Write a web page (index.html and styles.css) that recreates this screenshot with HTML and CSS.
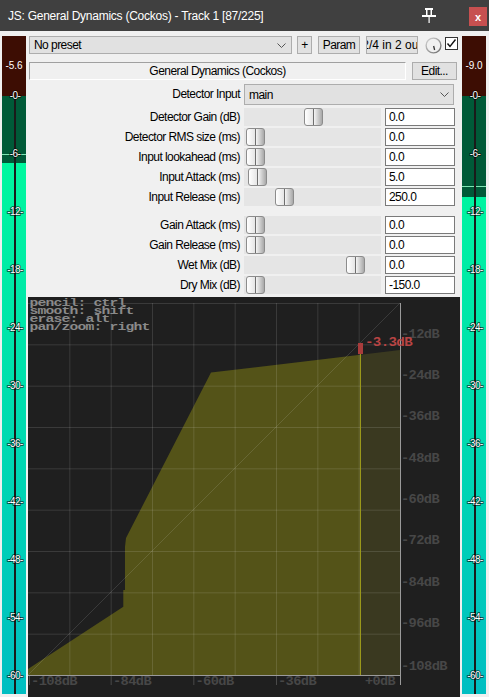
FILE: index.html
```html
<!DOCTYPE html>
<html>
<head>
<meta charset="utf-8">
<link rel="stylesheet" href="styles.css">
</head>
<body>
<div class="titlebar">
  <span class="title">JS: General Dynamics (Cockos) - Track 1 [87/225]</span>
  <svg class="pin" width="16" height="16" viewBox="0 0 16 16">
    <rect x="4" y="1" width="8" height="2" fill="#fff"/>
    <rect x="5" y="3" width="1.5" height="6" fill="#fff"/>
    <rect x="9.5" y="3" width="1.5" height="6" fill="#fff"/>
    <rect x="1" y="8" width="14" height="2" fill="#fff"/>
    <rect x="7.5" y="10" width="1.2" height="6" fill="#fff"/>
  </svg>
  <span class="close">x</span>
</div>
<div class="main">
  <svg class="meter" width="24" height="658" viewBox="0 0 24 658">
    <defs>
      <linearGradient id="mg" gradientUnits="userSpaceOnUse" x1="0" y1="60" x2="0" y2="658">
        <stop offset="0" stop-color="#00ff9a"/>
        <stop offset="1" stop-color="#00bec2"/>
      </linearGradient>
    </defs>
    <rect x="0" y="0" width="24" height="60" fill="#3d0d03"/>
    <rect x="0" y="60" width="24" height="598" fill="url(#mg)"/>
    <rect x="0" y="60" width="24" height="67" fill="#005a38"/>
    <rect x="0" y="118" width="24" height="1" fill="#7fe6b4"/>
    <rect x="12" y="60" width="2" height="598" fill="#1a1a1a"/>
    <text class="mtop" x="12" y="33">-5.6</text>
    <g class="mlab">
      <text x="13" y="63">-0-</text>
      <text x="13" y="121">-6-</text>
      <text x="13" y="179">-12-</text>
      <text x="13" y="237">-18-</text>
      <text x="13" y="295">-24-</text>
      <text x="13" y="353">-30-</text>
      <text x="13" y="411">-36-</text>
      <text x="13" y="469">-42-</text>
      <text x="13" y="527">-48-</text>
      <text x="13" y="585">-54-</text>
      <text x="13" y="643">-60-</text>
    </g>
  </svg>

  <div class="center">
    <div class="toprow">
      <div class="combo preset"><span>No preset</span>
        <svg width="9" height="5" viewBox="0 0 9 5"><polyline points="0.5,0.5 4.5,4.5 8.5,0.5" fill="none" stroke="#555" stroke-width="1"/></svg>
      </div>
      <div class="btn plus">+</div>
      <div class="btn param">Param</div>
      <div class="btn io"><span>2/4 in 2 out</span></div>
      <svg class="knob" width="17" height="17" viewBox="0 0 17 17">
        <defs>
          <linearGradient id="kg" x1="0" y1="0" x2="1" y2="1">
            <stop offset="0" stop-color="#d6d6d6"/>
            <stop offset="1" stop-color="#6a6a6a"/>
          </linearGradient>
        </defs>
        <circle cx="8.5" cy="8.5" r="7.4" fill="#f0f0f0" stroke="url(#kg)" stroke-width="1.4"/>
        <line x1="8.6" y1="9" x2="9.6" y2="13" stroke="#333" stroke-width="1.3"/>
      </svg>
      <div class="check">
        <svg width="13" height="13" viewBox="0 0 13 13"><polyline points="2.5,6.5 5,9.5 10.5,2.5" fill="none" stroke="#111" stroke-width="1.4"/></svg>
      </div>
    </div>

    <div class="namerow">
      <div class="namebox">General Dynamics (Cockos)</div>
      <div class="btn edit">Edit...</div>
    </div>

    <div class="params">
      <div class="lbl lbl-sel">Detector Input</div>
      <div class="combo sel"><span>main</span>
        <svg width="9" height="5" viewBox="0 0 9 5"><polyline points="0.5,0.5 4.5,4.5 8.5,0.5" fill="none" stroke="#555" stroke-width="1"/></svg>
      </div>

      <div class="lbl">Detector Gain (dB)</div>
      <div class="slider"><div class="thumb" style="left:60px"></div></div>
      <div class="val">0.0</div>

      <div class="lbl">Detector RMS size (ms)</div>
      <div class="slider"><div class="thumb" style="left:2px"></div></div>
      <div class="val">0.0</div>

      <div class="lbl">Input lookahead (ms)</div>
      <div class="slider"><div class="thumb" style="left:2px"></div></div>
      <div class="val">0.0</div>

      <div class="lbl">Input Attack (ms)</div>
      <div class="slider"><div class="thumb" style="left:4px"></div></div>
      <div class="val">5.0</div>

      <div class="lbl">Input Release (ms)</div>
      <div class="slider"><div class="thumb" style="left:31px"></div></div>
      <div class="val">250.0</div>

      <div class="spacer"></div>

      <div class="lbl">Gain Attack (ms)</div>
      <div class="slider"><div class="thumb" style="left:2px"></div></div>
      <div class="val">0.0</div>

      <div class="lbl">Gain Release (ms)</div>
      <div class="slider"><div class="thumb" style="left:2px"></div></div>
      <div class="val">0.0</div>

      <div class="lbl">Wet Mix (dB)</div>
      <div class="slider"><div class="thumb" style="left:102px"></div></div>
      <div class="val">0.0</div>

      <div class="lbl">Dry Mix (dB)</div>
      <div class="slider"><div class="thumb" style="left:2px"></div></div>
      <div class="val">-150.0</div>
    </div>

    <svg class="graph" width="432" height="400" viewBox="0 0 432 400">
      <rect x="0" y="0" width="432" height="400" fill="#1f1f1f"/>
      <polygon points="0,372 95.3,309.7 95.3,293 97,293 97,249.7 98,241 183,75.5 332.5,57.8 332.5,378 0,378" fill="#545318"/>
      <polygon points="332.5,57.8 372,53 372,378 332.5,378" fill="#3a3920"/>
      <g stroke="rgba(255,255,255,0.12)" stroke-width="1">
        <line x1="41.83" y1="6" x2="41.83" y2="378"/>
        <line x1="83.17" y1="6" x2="83.17" y2="378"/>
        <line x1="124.5" y1="6" x2="124.5" y2="378"/>
        <line x1="165.83" y1="6" x2="165.83" y2="378"/>
        <line x1="207.17" y1="6" x2="207.17" y2="378"/>
        <line x1="248.5" y1="6" x2="248.5" y2="378"/>
        <line x1="289.83" y1="6" x2="289.83" y2="378"/>
        <line x1="331.17" y1="6" x2="331.17" y2="378"/>
        <line x1="0" y1="6.5" x2="372" y2="6.5"/>
        <line x1="0" y1="47.83" x2="372" y2="47.83"/>
        <line x1="0" y1="89.17" x2="372" y2="89.17"/>
        <line x1="0" y1="130.5" x2="372" y2="130.5"/>
        <line x1="0" y1="171.83" x2="372" y2="171.83"/>
        <line x1="0" y1="213.17" x2="372" y2="213.17"/>
        <line x1="0" y1="254.5" x2="372" y2="254.5"/>
        <line x1="0" y1="295.83" x2="372" y2="295.83"/>
        <line x1="0" y1="337.17" x2="372" y2="337.17"/>
        <line x1="0" y1="378" x2="372" y2="6"/>
      </g>
      <g stroke="#4a4a4a" stroke-width="1">
        <line x1="1.5" y1="378" x2="1.5" y2="388"/>
        <line x1="83.17" y1="378" x2="83.17" y2="388"/>
        <line x1="165.83" y1="378" x2="165.83" y2="388"/>
        <line x1="248.5" y1="378" x2="248.5" y2="388"/>
      </g>
      <line x1="332.5" y1="57" x2="332.5" y2="378" stroke="#9a981a" stroke-width="1"/>
      <rect x="330" y="46" width="5" height="11" fill="#a83c3c"/>
      <line x1="0" y1="378.5" x2="373" y2="378.5" stroke="#9a9a9a" stroke-width="1"/>
      <line x1="372.5" y1="6" x2="372.5" y2="388" stroke="#9a9a9a" stroke-width="1"/>
      <g class="ax">
        <text x="373" y="40.5" textLength="38" lengthAdjust="spacingAndGlyphs">-12dB</text>
        <text x="373" y="81.8" textLength="38" lengthAdjust="spacingAndGlyphs">-24dB</text>
        <text x="373" y="123.2" textLength="38" lengthAdjust="spacingAndGlyphs">-36dB</text>
        <text x="373" y="164.5" textLength="38" lengthAdjust="spacingAndGlyphs">-48dB</text>
        <text x="373" y="205.8" textLength="38" lengthAdjust="spacingAndGlyphs">-60dB</text>
        <text x="373" y="247.2" textLength="38" lengthAdjust="spacingAndGlyphs">-72dB</text>
        <text x="373" y="288.5" textLength="38" lengthAdjust="spacingAndGlyphs">-84dB</text>
        <text x="373" y="329.8" textLength="38" lengthAdjust="spacingAndGlyphs">-96dB</text>
        <text x="373" y="372.5" textLength="46" lengthAdjust="spacingAndGlyphs">-108dB</text>
        <text x="3" y="388" textLength="46" lengthAdjust="spacingAndGlyphs">-108dB</text>
        <text x="85" y="388" textLength="38" lengthAdjust="spacingAndGlyphs">-84dB</text>
        <text x="167.5" y="388" textLength="38" lengthAdjust="spacingAndGlyphs">-60dB</text>
        <text x="250" y="388" textLength="38" lengthAdjust="spacingAndGlyphs">-36dB</text>
        <text x="337" y="388" textLength="30" lengthAdjust="spacingAndGlyphs">+0dB</text>
      </g>
      <text class="red" x="337" y="49" textLength="47" lengthAdjust="spacingAndGlyphs">-3.3dB</text>
      <g class="help">
        <text x="1.5" y="9" textLength="96" lengthAdjust="spacingAndGlyphs">pencil: ctrl</text>
        <text x="1.5" y="17" textLength="104" lengthAdjust="spacingAndGlyphs">smooth: shift</text>
        <text x="1.5" y="25" textLength="80" lengthAdjust="spacingAndGlyphs">erase: alt</text>
        <text x="1.5" y="33" textLength="120" lengthAdjust="spacingAndGlyphs">pan/zoom: right</text>
      </g>
    </svg>
  </div>

  <svg class="meter" width="24" height="658" viewBox="0 0 24 658">
    <defs>
      <linearGradient id="mg2" gradientUnits="userSpaceOnUse" x1="0" y1="60" x2="0" y2="658">
        <stop offset="0" stop-color="#00ff9a"/>
        <stop offset="1" stop-color="#00bec2"/>
      </linearGradient>
    </defs>
    <rect x="0" y="0" width="24" height="60" fill="#3d0d03"/>
    <rect x="0" y="60" width="24" height="598" fill="url(#mg2)"/>
    <rect x="0" y="60" width="24" height="101" fill="#005a38"/>
    <rect x="0" y="150" width="24" height="1" fill="#7fe6b4"/>
    <rect x="12" y="60" width="2" height="598" fill="#1a1a1a"/>
    <text class="mtop" x="12" y="33">-9.0</text>
    <g class="mlab">
      <text x="13" y="63">-0-</text>
      <text x="13" y="121">-6-</text>
      <text x="13" y="179">-12-</text>
      <text x="13" y="237">-18-</text>
      <text x="13" y="295">-24-</text>
      <text x="13" y="353">-30-</text>
      <text x="13" y="411">-36-</text>
      <text x="13" y="469">-42-</text>
      <text x="13" y="527">-48-</text>
      <text x="13" y="585">-54-</text>
      <text x="13" y="643">-60-</text>
    </g>
  </svg>
</div>
</body>
</html>
```
FILE: styles.css
```css
html, body {
  margin: 0;
  padding: 0;
}
body {
  width: 489px;
  height: 697px;
  overflow: hidden;
  background: #f0f0f0;
  font-family: "Liberation Sans", Arial, sans-serif;
  font-size: 12px;
  letter-spacing: -0.55px;
  color: #000;
}
.titlebar {
  height: 31px;
  background: #404040;
  color: #fff;
  display: flex;
  align-items: center;
  padding-left: 8px;
  box-sizing: border-box;
}
.title {
  flex: 1;
  font-size: 12px;
  letter-spacing: -0.25px;
  white-space: nowrap;
  margin-top: 1px;
}
.pin {
  margin-right: 32px;
  margin-top: -2px;
  flex: none;
}
.close {
  width: 18px;
  height: 19px;
  background: #c75050;
  color: #fff;
  font-weight: bold;
  font-size: 11px;
  letter-spacing: 0;
  display: flex;
  align-items: center;
  justify-content: center;
  margin-right: 2px;
  margin-top: 2px;
  flex: none;
}
.main {
  display: flex;
  gap: 2px;
  padding: 5px 0 0 2px;
}
.meter {
  flex: none;
  display: block;
}
.mtop {
  fill: #fff;
  font-family: "Liberation Sans", Arial, sans-serif;
  font-size: 10px;
  letter-spacing: 0;
  text-anchor: middle;
}
.mlab text {
  fill: #fff;
  font-family: "Liberation Sans", Arial, sans-serif;
  font-size: 10px;
  text-anchor: middle;
  letter-spacing: -0.6px;
  paint-order: stroke;
  stroke: rgba(0, 0, 0, 0.7);
  stroke-width: 1.6px;
}
.center {
  width: 432px;
  flex: none;
  display: flex;
  flex-direction: column;
}
.toprow {
  display: flex;
  align-items: center;
  height: 18px;
  padding-left: 1px;
}
.combo {
  background: #e1e1e1;
  border: 1px solid #adadad;
  box-sizing: border-box;
  display: flex;
  align-items: center;
  justify-content: space-between;
  padding: 0 5px 0 4px;
}
.preset {
  width: 263px;
  height: 18px;
}
.btn {
  background: #e1e1e1;
  border: 1px solid #adadad;
  box-sizing: border-box;
  height: 18px;
  display: flex;
  align-items: center;
  justify-content: center;
  white-space: nowrap;
  overflow: hidden;
}
.plus {
  width: 15px;
  margin-left: 5px;
}
.param {
  width: 42px;
  margin-left: 6px;
}
.io {
  width: 52px;
  margin-left: 6px;
  letter-spacing: 0;
}
.io span {
  flex: none;
}
.knob {
  margin-left: 7px;
  flex: none;
}
.check {
  width: 13px;
  height: 13px;
  margin-left: 3px;
  margin-top: -3px;
  border: 1px solid #333;
  background: #fff;
  box-sizing: border-box;
  display: flex;
  align-items: center;
  justify-content: center;
}
.check svg {
  flex: none;
}
.namerow {
  display: flex;
  margin-top: 8px;
  padding-left: 1px;
}
.namebox {
  width: 377px;
  height: 18px;
  box-sizing: border-box;
  border-top: 1px solid #a0a0a0;
  border-left: 1px solid #a0a0a0;
  border-right: 1px solid #fff;
  border-bottom: 1px solid #fff;
  display: flex;
  align-items: center;
  justify-content: center;
}
.edit {
  width: 45px;
  margin-left: 6px;
}
.params {
  display: grid;
  grid-template-columns: 212px 137px 70px;
  grid-template-rows: 22px repeat(5, 18px) 6px repeat(4, 18px);
  column-gap: 4px;
  row-gap: 2px;
  margin-top: 4px;
}
.lbl {
  text-align: right;
  line-height: 18px;
  white-space: nowrap;
}
.lbl-sel {
  line-height: 21px;
}
.sel {
  grid-column: span 2;
  height: 21px;
  width: 210px;
  padding-right: 4px;
}
.slider {
  background: #e5e5e5;
  position: relative;
}
.thumb {
  position: absolute;
  top: 0;
  width: 19px;
  height: 18px;
  box-sizing: border-box;
  border: 1px solid #8c8c8c;
  border-radius: 3px;
  background: linear-gradient(to right, #ffffff 0%, #e6e6e6 45%, #6e6e6e 45%, #6e6e6e 53%, #f4f4f4 53%, #a8a8a8 100%);
}
.val {
  background: #fff;
  border: 1px solid #7a7a7a;
  box-sizing: border-box;
  padding-left: 3px;
  line-height: 16px;
}
.spacer {
  grid-column: span 3;
}
.graph {
  display: block;
  margin-top: 3px;
}
.ax text {
  fill: #474747;
  font-family: "Liberation Mono", monospace;
  font-weight: bold;
  font-size: 12px;
}
.red {
  fill: #b84444;
  font-family: "Liberation Mono", monospace;
  font-weight: bold;
  font-size: 12px;
}
.help text {
  fill: #8a8a8a;
  font-family: "Liberation Mono", monospace;
  font-weight: bold;
  font-size: 10px;
}
```
